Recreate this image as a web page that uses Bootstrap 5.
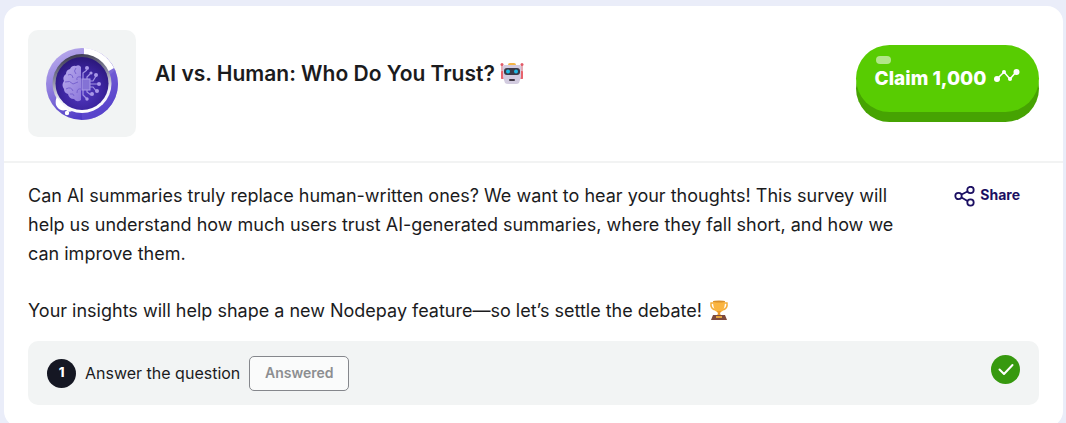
<!DOCTYPE html>
<html lang="en">
<head>
<meta charset="utf-8">
<meta name="viewport" content="width=device-width, initial-scale=1">
<title>AI vs. Human: Who Do You Trust?</title>
<link href="https://cdn.jsdelivr.net/npm/bootstrap@5.3.0/dist/css/bootstrap.min.css" rel="stylesheet">
<style>
  body { background: #eaedf9; color: #1b1b1d; font-family: Inter, "Liberation Sans", sans-serif; padding: 6px 3px 0 4px; }
  .survey { background: #fff; border-radius: 16px; }
  .survey-head { padding: 24px; border-bottom: 2px solid #f2f3f3; }
  .thumb { width: 108px; height: 107px; border-radius: 10px; background: #f2f4f4; }
  .survey-title { font-size: 21px; line-height: 28px; font-weight: 600; margin: 30px 0 0; padding-left: 19px; }
  .emoji { width: 24px; height: 24px; vertical-align: -5px; }
  .btn-claim { --bs-btn-color: #fff; --bs-btn-bg: #58cc02; --bs-btn-hover-color: #fff; --bs-btn-hover-bg: #61d806; --bs-btn-active-bg: #58cc02;
    width: 183px; height: 67px; border: 0; border-radius: 38px; box-shadow: 0 10px 0 #46a302; font-size: 19px; font-weight: 800; white-space: nowrap; padding: 2px 0 0; margin-top: 15px; }
  .shine { position: absolute; left: 20px; top: 11px; width: 15px; height: 8px; border-radius: 4px; background: #b2e68a; }
  .survey-body { padding: 18px 24px 22px; }
  .copy { font-size: 18px; line-height: 29px; width: 87%; }
  .copy p { margin-bottom: 28px; }
  .btn-share { --bs-btn-color: #1b0f62; --bs-btn-hover-color: #3a2aa0; font-size: 14px; line-height: 20px; font-weight: 700; padding: 0; border: 0; margin: 4px 19px 0 0; }
  .step { background: #f2f4f4; border-radius: 10px; padding: 14px 19px; margin-top: 16px; }
  .step-number { width: 29px; height: 29px; background: #151723; font-size: 13px; font-weight: 800; }
  .step-name { font-size: 16px; line-height: 24px; margin: 0 9px; }
  .btn-answered { --bs-btn-disabled-color: #8c8e91; --bs-btn-disabled-bg: #fafbfb; --bs-btn-disabled-border-color: #85878c; --bs-btn-disabled-opacity: 1;
    width: 100px; height: 35px; border-radius: 5px; font-size: 14px; font-weight: 600; padding: 0 0 2px; }
  .done { margin-bottom: 7px; }
</style>
</head>
<body>
<main class="survey">
  <header class="survey-head d-flex align-items-start">
    <div class="thumb d-flex align-items-center justify-content-center flex-shrink-0">
      <svg width="74" height="74" viewBox="0 0 74 74" role="img" aria-label="Brain with circuits">
        <defs>
          <linearGradient id="ring" x1="0" y1="0" x2=".5" y2="1"><stop offset="0" stop-color="#c2b5ee"/><stop offset=".45" stop-color="#9482e0"/><stop offset="1" stop-color="#4935c4"/></linearGradient>
          <linearGradient id="rim" x1=".4" y1="0" x2=".6" y2="1"><stop offset="0" stop-color="#3c3a50"/><stop offset=".35" stop-color="#85859d"/><stop offset=".7" stop-color="#eeeef8"/><stop offset="1" stop-color="#fff"/></linearGradient>
          <radialGradient id="core" cx=".5" cy=".65" r=".65"><stop offset="0" stop-color="#5339c2"/><stop offset=".6" stop-color="#3b249e"/><stop offset="1" stop-color="#2a1779"/></radialGradient>
          <linearGradient id="brain" x1="0" y1="0" x2="1" y2="1"><stop offset="0" stop-color="#b9acec"/><stop offset="1" stop-color="#8e79dc"/></linearGradient>
        </defs>
        <circle cx="37" cy="37" r="36" fill="url(#ring)"/>
        <path d="M39 1A36 36 0 0 1 69 21L62 25A29 29 0 0 0 39 8Z" fill="#fff"/>
        <path d="M70 23A36 36 0 0 1 37 73V65A29 29 0 0 0 64 29Z" fill="#6650d2" opacity=".55"/>
        <circle cx="37" cy="36.500" r="29.500" fill="url(#rim)"/>
        <circle cx="37" cy="36.500" r="26.500" fill="url(#core)"/>
        <path d="M12 50Q18 60 27 64Q24 66 21 63Q14 65 11 58Q10 53 12 50Z" fill="#fff"/>
        <circle cx="22" cy="66" r="2.200" fill="#fff"/>
        <g transform="translate(0 1)">
        <path d="M36 19Q34 16 31 18Q27 17 25 21Q21 22 21 26Q17 29 19 33Q16 37 19 41Q19 45 23 46Q24 51 29 51Q32 55 36 52Z" fill="url(#brain)"/>
        <path d="M31 20Q28 23 31 26M23 27Q27 25 28 30M20 34Q25 32 28 36L33 34M21 41Q26 38 28 43M25 46Q29 45 29 48M36 29Q31 28 32 32M36 41Q32 40 32 45" fill="none" stroke="#7863cf" stroke-width="1"/>
        <rect x="37" y="31" width="8" height="11" fill="#8472d5" stroke="#a99be7"/>
        <g fill="none" stroke="#a394e3" stroke-width="1.200"><path d="M38 31V25L42 22M42 31V29L45 26M45 33H48L51 28M45 36H54M45 39H48L52 44M42 42V44L46 47M38 42V47L42 51"/></g>
        <g fill="#a998e8"><circle cx="42" cy="20" r="2"/><circle cx="46" cy="25" r="1.600"/><circle cx="51" cy="27" r="2"/><circle cx="54" cy="36" r="2"/><circle cx="52" cy="43" r="2"/><circle cx="47" cy="46" r="2"/><circle cx="42" cy="51" r="1.700"/></g>
        </g>
      </svg>
    </div>
    <h1 class="survey-title flex-grow-1">AI vs. Human: Who Do You Trust?
      <svg class="emoji" viewBox="0 0 24 24" role="img" aria-label="Robot">
        <path d="M8 4V3Q8 1 10 1H14Q16 1 16 3V4Z" fill="#f5b546"/>
        <path d="M2 3V17M22 3V17" stroke="#d98a98" stroke-width="1.400"/><circle cx="2" cy="2.500" r="1.500" fill="#e35b68"/><circle cx="22" cy="2.500" r="1.500" fill="#e35b68"/>
        <rect x="1" y="9" width="3" height="8" rx="1" fill="#e8636c"/><rect x="20" y="9" width="3" height="8" rx="1" fill="#e8636c"/>
        <path d="M4 3H20Q21 3 21 5V15L19 21Q18 22 16 22H8Q6 22 5 21L3 15V5Q3 3 4 3Z" fill="#d2cbdf"/>
        <rect x="4" y="6" width="16" height="7" rx="3" fill="#3b3946"/><circle cx="8" cy="9.500" r="2" fill="#20b9e4"/><circle cx="16" cy="9.500" r="2" fill="#20b9e4"/><rect x="9" y="17" width="6" height="2" rx="1" fill="#403845"/>
      </svg>
    </h1>
    <button type="button" class="btn btn-claim position-relative d-flex align-items-center justify-content-center flex-shrink-0">
      <span class="shine"></span>Claim 1,000
      <svg class="ms-2 mb-2" width="26" height="14" viewBox="0 0 26 14" aria-hidden="true"><path d="M3 10L10 3L16 10L22 3" fill="none" stroke="#fff" stroke-width="1.500"/><g fill="#fff"><circle cx="3" cy="10" r="3"/><circle cx="10" cy="3" r="2"/><circle cx="16" cy="10" r="2"/><circle cx="22.500" cy="3" r="3"/></g></svg>
    </button>
  </header>
  <section class="survey-body">
    <div class="d-flex align-items-start justify-content-between">
      <div class="copy">
        <p>Can AI summaries truly replace human-written ones? We want to hear your thoughts! This survey will help us understand how much users trust AI-generated summaries, where they fall short, and how we can improve them.</p>
        <p class="mb-0">Your insights will help shape a new Nodepay feature—so let’s settle the debate!
          <svg class="emoji" viewBox="0 0 24 24" role="img" aria-label="Trophy">
            <path d="M7 5H4Q3 11 9 12M17 5H20Q21 11 15 12" fill="none" stroke="#f3ad3a" stroke-width="1.500"/>
            <path d="M6 3H18Q18 12 14 14H10Q6 12 6 3Z" fill="#fbb540"/><path d="M10 13H14L13 16L15 18H9L11 16Z" fill="#e99a2e"/><ellipse cx="12" cy="3.500" rx="6" ry="1" fill="#d9912c"/>
            <path d="M6 17H18L20 22H4Z" fill="#7d4a3d"/><rect x="9" y="18" width="6" height="2" fill="#e6a33b"/>
          </svg></p>
      </div>
      <button type="button" class="btn btn-share d-flex align-items-center">
        <svg class="me-1" width="22" height="22" viewBox="0 0 22 22" fill="none" stroke="#1b0f62" stroke-width="1.800" aria-hidden="true"><circle cx="4.500" cy="10" r="3.200"/><circle cx="16.500" cy="4" r="3.200"/><circle cx="16.500" cy="16.500" r="3.200"/><path d="M7.500 8.500L13.500 5.500M7.500 11.500L13.500 15"/></svg><span class="pb-1">Share</span>
      </button>
    </div>
    <div class="step d-flex align-items-center">
      <span class="step-number rounded-circle text-white d-flex align-items-center justify-content-center">1</span>
      <span class="step-name">Answer the question</span>
      <button type="button" class="btn btn-answered" disabled>Answered</button>
      <svg class="done ms-auto" width="29" height="29" viewBox="0 0 29 29" role="img" aria-label="Done"><circle cx="14.500" cy="14.500" r="14.500" fill="#37990f"/><path d="M8.500 14.500L13 19L21.500 10" fill="none" stroke="#fff" stroke-width="2" stroke-linecap="round" stroke-linejoin="round"/></svg>
    </div>
  </section>
</main>
<script src="https://cdn.jsdelivr.net/npm/bootstrap@5.3.0/dist/js/bootstrap.bundle.min.js"></script>
</body>
</html>
